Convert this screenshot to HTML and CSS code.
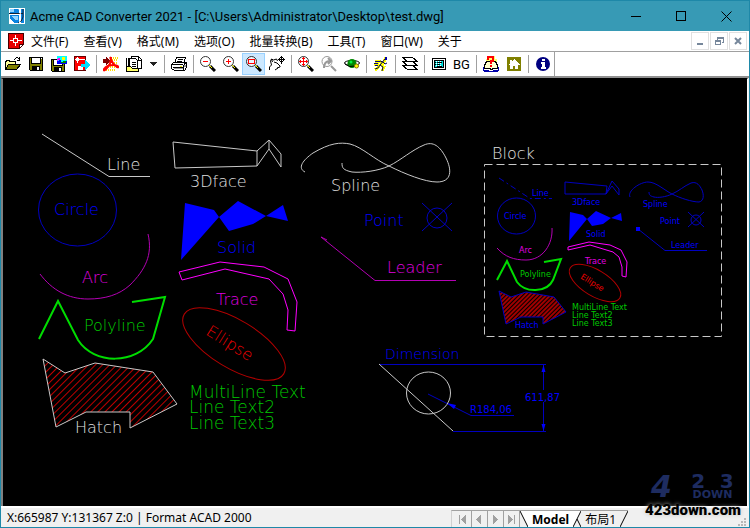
FILE: index.html
```
<!DOCTYPE html>
<html lang="zh-CN">
<head>
    <meta charset="UTF-8">
    <title>Acme CAD Converter 2021</title>
    <link rel="stylesheet" href="styles.css">
</head>
<body>
  <header class="titlebar">
    <svg class="logo" viewBox="0 0 16 16">
      <path fill="#fff" d="M0 0h16v16H0z"/>
      <path fill="#0a84e0" d="M1 1h9v4H1zM1 7h9v8H5L1 11zM12 1h3v14h-3z"/>
      <path fill="#8fd4ff" d="M1 1h4v3H1zM3 8h6v4H6z"/>
      <path class="smooth" fill="none" stroke="#123" d="M0 5.500h14M14 1v8q-1 5-5 6"/>
      <path class="smooth" fill="none" stroke="#fff" d="M10 1c2 5 2 9 0 15"/>
    </svg>
    <h1>Acme CAD Converter 2021 - [C:\Users\Administrator\Desktop\test.dwg]</h1>
    <div class="win-buttons">
      <button aria-label="Minimize"><svg viewBox="0 0 11 11"><path d="M0 5.500h10"/></svg></button>
      <button aria-label="Maximize"><svg viewBox="0 0 11 11"><path d="M.5.5h9v9h-9z"/></svg></button>
      <button aria-label="Close"><svg class="smooth" viewBox="0 0 11 11"><path d="M.5.5l10 10M10.500.5l-10 10"/></svg></button>
    </div>
  </header>

  <nav class="menubar">
    <svg class="doc-icon" viewBox="0 0 16 16">
      <path fill="#e80000" stroke="#400" d="M.5.5h15v11l-4 4H.5z"/>
      <path fill="#fff" stroke="#400" d="M15.500 11.500h-4v4z"/>
      <path fill="none" stroke="#fff" d="M2 7.500h4M9 7.500h5M7.500 2v4M7.500 9v4M5.500 5.500h4v4h-4z"/>
    </svg>
    <button>文件(F)</button>
    <button>查看(V)</button>
    <button>格式(M)</button>
    <button>选项(O)</button>
    <button>批量转换(B)</button>
    <button>工具(T)</button>
    <button>窗口(W)</button>
    <button>关于</button>
    <div class="mdi-buttons">
      <button aria-label="Minimize document"><svg viewBox="0 0 9 9"><path d="M1 7h6" stroke-width="2"/></svg></button>
      <button aria-label="Restore document"><svg viewBox="0 0 9 9"><path d="M2.500 3V.5h6v5H7M2 1h7M.5 3.500h5v4h-5zM0 4h6"/></svg></button>
      <button aria-label="Close document"><svg class="smooth" viewBox="0 0 9 9"><path d="M1 1l6 6M7 1L1 7" stroke-width="2"/></svg></button>
    </div>
  </nav>

  <div class="toolbar">
    <button aria-label="Open">
      <svg viewBox="0 0 16 16"><path fill="#ff9" stroke="#000" d="M.5 13.500v-8h1v-1h3v1h6v3"/><path fill="#808000" stroke="#000" d="M.5 13.500l3-5h12l-4 5z"/><path fill="none" stroke="#000" d="M9 3.500h1M10 2.500h1M11 1.500h2M13 2.500h1M14.500 1v4M12 4.500h3"/></svg>
    </button>
    <button aria-label="Save">
      <svg viewBox="0 0 16 16"><path fill="#808000" stroke="#000" d="M1.500 1.500h13v13h-12l-1-1z"/><path fill="#fff" stroke="#000" d="M3.500 1.500h9v6h-9z"/><path d="M4 10h8v5H4z"/><path fill="#fff" d="M9 11h2v3H9zM13 2h1v1h-1z"/></svg>
    </button>
    <button aria-label="Save as">
      <svg viewBox="0 0 16 16"><path fill="#808000" stroke="#000" d="M.5 3.500h13v12h-12l-1-1z"/><path fill="#fff" stroke="#000" d="M2.500 3.500h9v6h-9z"/><path d="M3 11h8v5H3z"/><path fill="#fff" d="M8 12h2v3H8z"/><path fill="#0ff" d="M6 0h10v8H6z"/><path fill="#ff0" d="M11 1h3v3h-3z"/><path fill="#00f" d="M6 5h2V4h2v2h2V5h4v3H6z"/><path fill="#f0f" d="M6 3h1V2h2v2H7v1H6z"/><path fill="#080" d="M10 6h2V5h3v2h-5z"/></svg>
    </button>
    <button aria-label="Exit">
      <svg viewBox="0 0 16 16"><path fill="#f00" stroke="#600" d="M.5.5h11v14H.5z"/><path fill="none" stroke="#fff" d="M3.500 1v6M1 3.500h2M4 3.500h7M2.500 2.500h2v2h-2z"/><path fill="#fff" d="M4 10h5v4H4z"/><path fill="#0df" d="M7 8h4V4l5 5-5 5v-3H7z"/></svg>
    </button>
    <span class="sep"></span>
    <button aria-label="Export PDF">
      <svg viewBox="0 0 16 16"><path fill="none" stroke="#fd0" stroke-width="2" stroke-dasharray="1 1" d="M8 2h7M9 4h6M3 11h12M1 14h12M9 7h5M5 9h7"/><path fill="#800000" d="M0 3h3V1l4 4-4 4V7H0z"/><path class="smooth" fill="none" stroke="#f00" stroke-width="2" d="M7 1c2 4 1 6 7 10 3 1 1-2-3-2-5 0-8 1-10 4-1 2 1 2 3-1 2-2 4-5 4-11"/></svg>
    </button>
    <button aria-label="Batch convert">
      <svg viewBox="0 0 16 16"><path fill="#fff" stroke="#000" d="M5.500 3.500V.5h7l3 3v9h-3"/><path fill="#fff" stroke="#000" d="M3.500 12V2.500h6l2 2v8"/><path fill="none" stroke="#000" d="M.5 1.500v13M2.500 1.500v10M6 6.500h4M6 8.500h4M6 10.500h4M12.500 1v3h3"/><path fill="#ff6" stroke="#000" d="M.5 10.500h4l2 2h6v3H.5z"/></svg>
    </button>
    <button class="drop" aria-label="Batch options"><svg viewBox="0 0 7 4"><path fill="#222" d="M0 0h7L3.500 4z"/></svg></button>
    <span class="sep"></span>
    <button aria-label="Print">
      <svg viewBox="0 0 16 16"><path fill="#fff" stroke="#000" d="M3.500 7.500l2-6h9l-2 6z"/><path fill="none" stroke="#000" d="M7 3.500h5M6 5.500h5"/><path fill="#fff" stroke="#000" d="M.5 8.500l2-2h13v5l-2 3h-10l-3-2z"/><path fill="none" stroke="#000" d="M1 8.500h11M12.500 9v5M13 8.500l2-2M2 11.500h10"/><path fill="#999" d="M3 12h9v1H3zM13 9h2v2h-2z"/><path fill="#ee0" d="M9 10h2v1H9z"/></svg>
    </button>
    <span class="sep"></span>
    <button aria-label="Zoom out">
      <svg viewBox="0 0 16 16"><use href="#lens"/><path stroke="#f00" d="M3 5.500h5"/></svg>
    </button>
    <button aria-label="Zoom in">
      <svg viewBox="0 0 16 16"><use href="#lens"/><path stroke="#f00" d="M3 5.500h5M5.500 3v5"/></svg>
    </button>
    <button class="on" aria-label="Zoom window">
      <svg viewBox="0 0 16 16"><use href="#lens"/><path fill="none" stroke="#f00" d="M2.500 3.500h6v4h-6z"/></svg>
    </button>
    <button aria-label="Pan">
      <svg viewBox="0 0 16 16"><path class="smooth" fill="none" stroke="#000" d="M.5 14v-3l2-2-1-4 1-2 2 1 3-1 1 2M5 6l3 1 3 3v1l-3 1M6 14l3-2M2.500 3l1 3"/><path fill="none" stroke="#000" d="M12.500 0v8M9 3.500h7M11 1.500h3M11 5.500h3M10.500 2v3M14.500 2v3"/></svg>
    </button>
    <span class="sep"></span>
    <button aria-label="Zoom extents">
      <svg viewBox="0 0 16 16"><use href="#lens"/><path fill="none" stroke="#f00" d="M1 5.500h9M5.500 1v9M4 2.500h3M4 8.500h3M2.500 4v3M8.500 4v3"/></svg>
    </button>
    <button aria-label="Zoom previous">
      <svg viewBox="0 0 16 16"><circle class="smooth" cx="6" cy="5.500" r="5" fill="none" stroke="#999"/><path class="smooth" fill="none" stroke="#999" stroke-width="2" d="M10 10l5 5M3 12c0-4 1-7 6-7M7 2l3 3-3 3"/></svg>
    </button>
    <button aria-label="3D orbit">
      <svg class="smooth" viewBox="0 0 16 16"><ellipse cx="8" cy="7" rx="7.500" ry="2.500" fill="none" stroke="#000"/><circle cx="8" cy="7.500" r="4.500" fill="#080"/><circle cx="7" cy="6" r="1.500" fill="#0e4"/><path fill="none" stroke="#000" d="M1 8q4 4 10 2"/><circle cx="12.500" cy="10" r="2" fill="#ff0" stroke="#870"/></svg>
    </button>
    <span class="sep"></span>
    <button aria-label="Run script">
      <svg viewBox="0 0 16 16"><path fill="none" stroke="#ff0" stroke-width="3" d="M2 5h6M1 8h5M13 1l-2 5-3 3 3 2-2 4M7 10l-5 4"/><path fill="none" stroke="#008" d="M2 5.500h5M1 7.500h4M2 9.500h3"/><path class="smooth" fill="none" stroke="#005" d="M12 3L7 9l3 2-1 4M7 5l3 1 2 2 2-1M7 9l-2 3-3 1"/><path fill="#00a" d="M12 1h2v3h-2z"/></svg>
    </button>
    <span class="sep"></span>
    <button aria-label="Layers">
      <svg viewBox="0 0 16 16"><path fill="#fff" stroke="#000" d="M.5 9.500h10l5 4h-10z"/><path fill="#fff" stroke="#000" d="M.5 5.500h10l5 4h-10z"/><path fill="#fff" stroke="#000" d="M.5 1.500h10l5 4h-10z"/></svg>
    </button>
    <span class="sep"></span>
    <button aria-label="Layout view">
      <svg viewBox="0 0 16 16"><path fill="#fff" stroke="#000" d="M1.500 2.500h13v11h-13z"/><path fill="#0dd" stroke="#000" d="M3.500 4.500h9v7h-9z"/><path stroke="#000" d="M6 6.500h5M6 8.500h3M6 10.500h5M4 6.500h1M4 8.500h1"/><path stroke="#fff" d="M5 5.500h6M5 7.500h6M5 9.500h6" stroke-dasharray="1 1"/></svg>
    </button>
    <button class="bg">BG</button>
    <span class="sep"></span>
    <button aria-label="Help">
      <svg viewBox="0 0 16 16"><path fill="#ff6" d="M5 0h7v3h2v6H3V3h2z"/><path fill="#ffc" stroke="#000" d="M1.500 12.500v-3l2-4h3l1.500 2 1.500-2h3l2 4v3h-4l-2 1-2-1z"/><path fill="none" stroke="#00a" d="M0 14.500h6M10 14.500h6M1 15.500h14M.5 11v4M15.500 11v4"/><path fill="none" stroke="#f00" stroke-width="2" d="M5 4V1h5v4H8v3M8 9v2"/></svg>
    </button>
    <button aria-label="Home page">
      <svg viewBox="0 0 16 16"><rect x="1" y="1" width="14" height="14" rx="1" fill="#808000"/><path fill="#fff" d="M8 3l6 6h-2v4H9v-3H7v3H4V9H2l2-2V4h2v1z"/></svg>
    </button>
    <span class="sep"></span>
    <button aria-label="About">
      <svg viewBox="0 0 16 16"><circle class="smooth" cx="8" cy="8" r="7" fill="#000080"/><path fill="#fff" d="M7 3h3v2H7zM6 6h4v5h1v2H6v-2h1V8H6z"/></svg>
    </button>
    <span class="toolbar-end"></span>
  </div>

  <main class="canvas">
    <svg class="drawing" viewBox="3 79 744 427" preserveAspectRatio="xMinYMin meet">
      <defs>
        <g id="lens"><circle class="smooth" cx="5.500" cy="5.500" r="5" fill="#fff" fill-opacity=".6" stroke="#333"/><path class="smooth" fill="none" stroke="#000" stroke-width="3" d="M10 10l5 5"/><path class="smooth" stroke="#ff0" d="M9 9l3 3"/></g>
        <pattern id="hatch" width="5" height="5" patternUnits="userSpaceOnUse" patternTransform="rotate(45)"><path stroke="#c00000" d="M.5 0v5"/></pattern>
        <pattern id="hatch-small" width="3" height="3" patternUnits="userSpaceOnUse" patternTransform="rotate(45)"><path stroke="#a00000" stroke-width="2" d="M1 0v3"/></pattern>
      </defs>

      <!-- white entities -->
      <g class="line white">
        <path d="M42 134L109 176.500H150"/>
        <path d="M173 142L257 151V166L175 168zM257 151L269 140V149L257 166M269 140L281 154V167L269 149"/>
        <path d="M305 172C297 168 303 160 313 153C330 143 340 142 350 144C362 147 375 160 389 166C405 174 425 182 437 182C452 182 452 170 446 158C440 146 433 141 424 145C412 150 401 160 389 166C378 171 362 173 352 172C343 170 342 168 342 163"/>
      </g>
      <g class="label silver">
        <text x="107" y="170">Line</text>
        <text x="190" y="187">3Dface</text>
        <text x="331" y="191">Spline</text>
        <text x="492" y="159">Block</text>
        <text x="75" y="433">Hatch</text>
      </g>

      <!-- blue entities -->
      <g class="line navy">
        <ellipse cx="77.500" cy="210" rx="39" ry="36"/>
        <circle cx="437" cy="218" r="10"/>
        <path d="M422 203L452 231M452 203L422 231"/>
      </g>
      <path class="solid" d="M185 203L214 210L219 217L181 260zM219 217L238 201L266 216L253 224L229 231zM266 216L283 205L288 221z"/>
      <g class="label navy-text">
        <text x="54" y="215">Circle</text>
        <text x="217" y="253">Solid</text>
        <text x="364" y="226">Point</text>
      </g>

      <!-- magenta entities -->
      <g class="line purple">
        <path d="M148 234C153 255 145 270 130 285C119 295 105 299 88 299C68 299 52 290 40 274"/>
        <path d="M321 237L375 280.500H456M321 237l6 3"/>
      </g>
      <path class="line magenta" d="M179 272L220 262L264 267L288 279L297 302L295 331L287 330L288 310L283 294L269 279L225 269L182 280z"/>
      <g class="label purple-text">
        <text x="82" y="283">Arc</text>
        <text x="387" y="273">Leader</text>
        <text x="216" y="305">Trace</text>
      </g>

      <path class="line green" d="M39 339L58 301L78 340C94 365 136 365 153 339L165 297L132 302"/>
      <g class="label green-text">
        <text x="84" y="331">Polyline</text>
        <text class="multi" x="189" y="398">MultiLine Text</text>
        <text class="multi" x="189" y="413">Line Text2</text>
        <text class="multi" x="189" y="429">Line Text3</text>
      </g>

      <ellipse class="line red" cx="234" cy="344" rx="58" ry="24" transform="rotate(31 234 344)"/>
      <text class="label red-text" x="205" y="334" transform="rotate(32 205 334)">Ellipse</text>
      <path class="line white" fill="url(#hatch)" d="M43 359L65 373L95 363L153 372L177 404L130 428V412H86L56 427z"/>

      <!-- dimension -->
      <path class="line navy" d="M379 364.500H546M453 431.500H546M543.500 364V390M543.500 402V431M428 394L471 415.500H514"/>
      <path class="solid" d="M543.500 365l-2 7h4zM543.500 431l-2-7h4zM447 403l9 2-2 4z"/>
      <path class="line white" d="M379 364L453 431"/>
      <ellipse class="line white" cx="428.500" cy="393" rx="22" ry="21"/>
      <g class="navy-text">
        <text class="dim-title" x="385" y="359">Dimension</text>
        <text class="dim" x="470" y="413">R184,06</text>
        <text class="dim" x="525" y="401">611,87</text>
      </g>

      <!-- block -->
      <path class="line white" stroke-dasharray="8 4" d="M484.500 164.500H721.500V336.500H484.500z"/>
      <g class="line navy">
        <path stroke-dasharray="6 3 2 3" d="M499 178L530 198.500H552"/>
        <ellipse cx="516.500" cy="216" rx="19" ry="18"/>
        <path d="M565 182L607 186L606 194H565zM606 194L612 181L619 189V195L612 186z"/>
        <path d="M630 197C627 191 640 182 648 182C656 182 664 190 672 194C680 198 692 202 699 202C704 201 704 195 702 190C700 186 697 181 691 183C684 186 679 191 672 194C666 197 658 198 654 197C650 196 649 195 649 192"/>
        <circle cx="696" cy="220" r="5"/>
        <path d="M688 212L704 227M704 212L688 227"/>
        <path d="M638 229L665 250.500H707"/>
      </g>
      <path class="solid" d="M570 212L583 215L587 219L569 241zM587 219L596 211L611 218L603 224L592 226zM611 218L621 213L622 221zM636 227h4v4h-4z"/>
      <path class="line purple" d="M552 228C553 244 543 260 526 260C514 260 505 257 497 248"/>
      <path class="line magenta" d="M568 247L589 242L610 245L621 250L627 262L626 277L622 276V267L619 257L613 252L590 245L568 250z"/>
      <path class="line green" d="M497 280L507 261L517 282C525 293 547 293 553 280L561 259L544 262"/>
      <ellipse class="line red" cx="595" cy="283" rx="29" ry="13" transform="rotate(31 595 283)"/>
      <path class="line navy" fill="url(#hatch-small)" d="M499 291L511 297L526 292L554 297L566 312L543 324V317H521L506 324z"/>
      <g class="small navy-text">
        <text x="532" y="196">Line</text>
        <text x="504" y="219">Circle</text>
        <text x="572" y="205">3Dface</text>
        <text x="643" y="207">Spline</text>
        <text x="586" y="237">Solid</text>
        <text x="660" y="224">Point</text>
        <text x="671" y="248">Leader</text>
        <text x="515" y="328">Hatch</text>
      </g>
      <g class="small purple-text">
        <text x="519" y="253">Arc</text>
        <text x="585" y="264">Trace</text>
      </g>
      <g class="small green-text">
        <text x="520" y="277">Polyline</text>
        <text x="572" y="310">MultiLine Text</text>
        <text x="572" y="318">Line Text2</text>
        <text x="572" y="326">Line Text3</text>
      </g>
      <text class="small red-text" x="580" y="278" transform="rotate(32 580 278)">Ellipse</text>
    </svg>
  </main>

  <footer class="statusbar">
    <output>X:665987 Y:131367 Z:0 | Format ACAD 2000</output>
    <div class="tabs">
      <button class="step" aria-label="First"><svg viewBox="0 0 8 9"><path d="M0 0h1v9H0zM7 0v9L2 4.500z"/></svg></button>
      <button class="step" aria-label="Previous"><svg viewBox="0 0 8 9"><path d="M6 0v9L1 4.500z"/></svg></button>
      <button class="step" aria-label="Next"><svg viewBox="0 0 8 9"><path d="M2 0v9l5-4.500z"/></svg></button>
      <button class="step" aria-label="Last"><svg viewBox="0 0 8 9"><path d="M7 0h1v9H7zM1 0v9l5-4.500z"/></svg></button>
      <svg class="edge" viewBox="0 0 8 16"><path fill="#fff" d="M0 0h8v16z"/><path d="M0 0l8 16"/></svg>
      <button class="tab current">Model</button>
      <svg class="edge" viewBox="0 0 8 16"><path fill="#fff" d="M0 0h8L0 16z"/><path d="M8 0L0 16M4 8l4 8"/></svg>
      <button class="tab">布局1</button>
      <svg class="edge" viewBox="0 0 8 16"><path d="M8 0L0 16"/></svg>
    </div>
    <svg class="grip" viewBox="0 0 9 9"><path d="M6 0h2v2H6zM3 3h2v2H3zM6 3h2v2H6zM0 6h2v2H0zM3 6h2v2H3zM6 6h2v2H6z"/></svg>
  </footer>

  <div class="watermark">
    <div class="mark">
      <span class="four">4</span>
      <div class="rest">
        <div class="num"><span>2</span><span>3</span></div>
        <div class="down">DOWN</div>
      </div>
    </div>
    <div class="site">423down.com</div>
  </div>
</body>
</html>
```
FILE: styles.css
```
* {
  box-sizing: border-box;
}

body {
  margin: 0;
  height: 100vh;
  display: flex;
  flex-direction: column;
  position: relative;
  overflow: hidden;
  background-color: #f0f0f0;
  border: 1px solid #1e88a8;
  font-family: "Noto Sans", "Noto Sans CJK SC", sans-serif;
  font-size: 12px;
  color: #000;
}

button {
  border: none;
  background: none;
  padding: 0;
  margin: 0;
  font: inherit;
  color: inherit;
  display: flex;
  align-items: center;
  justify-content: center;
}

svg {
  display: block;
  shape-rendering: crispEdges;
}

.smooth {
  shape-rendering: auto;
}

/* title bar */
.titlebar {
  display: flex;
  align-items: center;
  height: 30px;
  padding-left: 8px;
  background-color: #379ab5;
}

.logo {
  width: 16px;
  height: 16px;
}

h1 {
  margin: 0 0 0 5px;
  flex: 1;
  font-family: Roboto, sans-serif;
  font-size: 13px;
  font-weight: normal;
  white-space: nowrap;
}

.win-buttons {
  display: flex;
}

.win-buttons button {
  width: 45px;
  height: 29px;
}

.win-buttons svg {
  width: 11px;
  height: 11px;
  fill: none;
  stroke: #000;
}

/* menu bar */
.menubar {
  display: flex;
  align-items: center;
  height: 21px;
  padding: 0 2px 0 7px;
  background-color: #fff;
  border-bottom: 1px solid #a0a0a0;
}

.menubar > button {
  margin-right: 15px;
  white-space: nowrap;
}

.doc-icon {
  width: 16px;
  height: 16px;
  margin-right: 7px;
}

.mdi-buttons {
  display: flex;
  gap: 1px;
  margin-left: auto;
}

.mdi-buttons button {
  width: 18px;
  height: 18px;
  border: 1px solid #e0e0e0;
}

.mdi-buttons svg {
  width: 9px;
  height: 9px;
  fill: none;
  stroke: #76879b;
}

/* toolbar */
.toolbar {
  display: flex;
  align-items: center;
  height: 26px;
  background-color: #fff;
  border-bottom: 2px solid #909090;
}

.toolbar button {
  width: 23px;
  height: 22px;
}

.toolbar .on {
  background-color: #cce8ff;
  border: 1px solid #99d1ff;
}

.toolbar svg {
  width: 16px;
  height: 16px;
  flex: none;
}

.toolbar .drop {
  width: 16px;
}

.toolbar .drop svg {
  width: 7px;
  height: 4px;
}

.toolbar .bg {
  font-family: Roboto, sans-serif;
  font-size: 13px;
}

.sep {
  width: 6px;
  height: 18px;
  background: linear-gradient(#a0a0a0, #a0a0a0) center / 1px 100% no-repeat;
}

.toolbar-end {
  height: 24px;
  border-right: 1px solid #a0a0a0;
}

/* drawing area */
.canvas {
  flex: 1;
  min-height: 0;
  margin-right: 1px;
  background-color: #000;
  border-top: 1px solid #000;
  border-left: 2px solid #808080;
  border-right: 1px solid #fff;
}

.drawing {
  width: 100%;
  height: 100%;
  shape-rendering: auto;
  font-family: "DejaVu Sans", sans-serif;
  font-weight: 200;
}

.line {
  stroke-width: 1;
}

.line:not([fill]) {
  fill: none;
}

.white {
  stroke: #c8c8c8;
}

.navy {
  stroke: #0000c0;
}

.purple {
  stroke: #b400b4;
}

.magenta {
  stroke: #f0f;
}

.green {
  stroke: #00dc00;
  stroke-width: 2;
}

.red {
  stroke: #b40000;
}

.solid {
  fill: #00f;
}

.label {
  font-size: 16px;
}

.multi {
  font-size: 17px;
}

.dim-title {
  font-size: 14px;
}

.dim {
  font-size: 10px;
  font-weight: normal;
}

.small {
  font-size: 8px;
  font-weight: normal;
}

.silver {
  fill: #e0e0e0;
}

.navy-text {
  fill: #0000ff;
}

.purple-text {
  fill: #e000e0;
}

.green-text {
  fill: #00c800;
}

.red-text {
  fill: #f00000;
}

/* status bar */
.statusbar {
  display: flex;
  align-items: flex-end;
  height: 21px;
  padding: 0 2px 0 6px;
  border-top: 2px solid #fff;
}

.statusbar output {
  flex: 1;
  line-height: 18px;
}

.tabs {
  display: flex;
  height: 17px;
  padding-left: 4px;
  margin-right: 16px;
  border-top: 1px solid #a0a0a0;
  border-left: 1px solid #d0d0d0;
}

.step {
  width: 16px;
  border-right: 1px solid #a0a0a0;
}

.step svg {
  width: 8px;
  height: 9px;
  fill: #a0a0a0;
}

.edge {
  width: 8px;
  height: 16px;
  stroke: #000;
  shape-rendering: auto;
}

.edge [fill] {
  stroke: none;
}

.tab {
  padding: 0 4px;
}

.current {
  background-color: #fff;
  font-weight: bold;
}

.grip {
  width: 9px;
  height: 9px;
  margin-left: 94px;
  fill: #b8b8b8;
}

/* site mark over the bottom right corner */
.watermark {
  position: absolute;
  right: 6px;
  bottom: 8px;
  width: 98px;
}

.mark {
  display: flex;
  padding: 0 2px 0 6px;
  color: #1e2c60;
  font-family: "DejaVu Sans", sans-serif;
  font-weight: bold;
}

.four {
  font-size: 30px;
  line-height: 28px;
  font-style: italic;
}

.rest {
  flex: 1;
  margin-left: 12px;
}

.num {
  display: flex;
  justify-content: space-around;
  font-size: 20px;
  line-height: 16px;
}

.down {
  font-size: 11px;
  line-height: 12px;
  text-align: center;
}

.site {
  font-family: Roboto, sans-serif;
  font-size: 15px;
  line-height: 18px;
  font-weight: 900;
  text-shadow: 0 0 4px #bbb;
}
```
